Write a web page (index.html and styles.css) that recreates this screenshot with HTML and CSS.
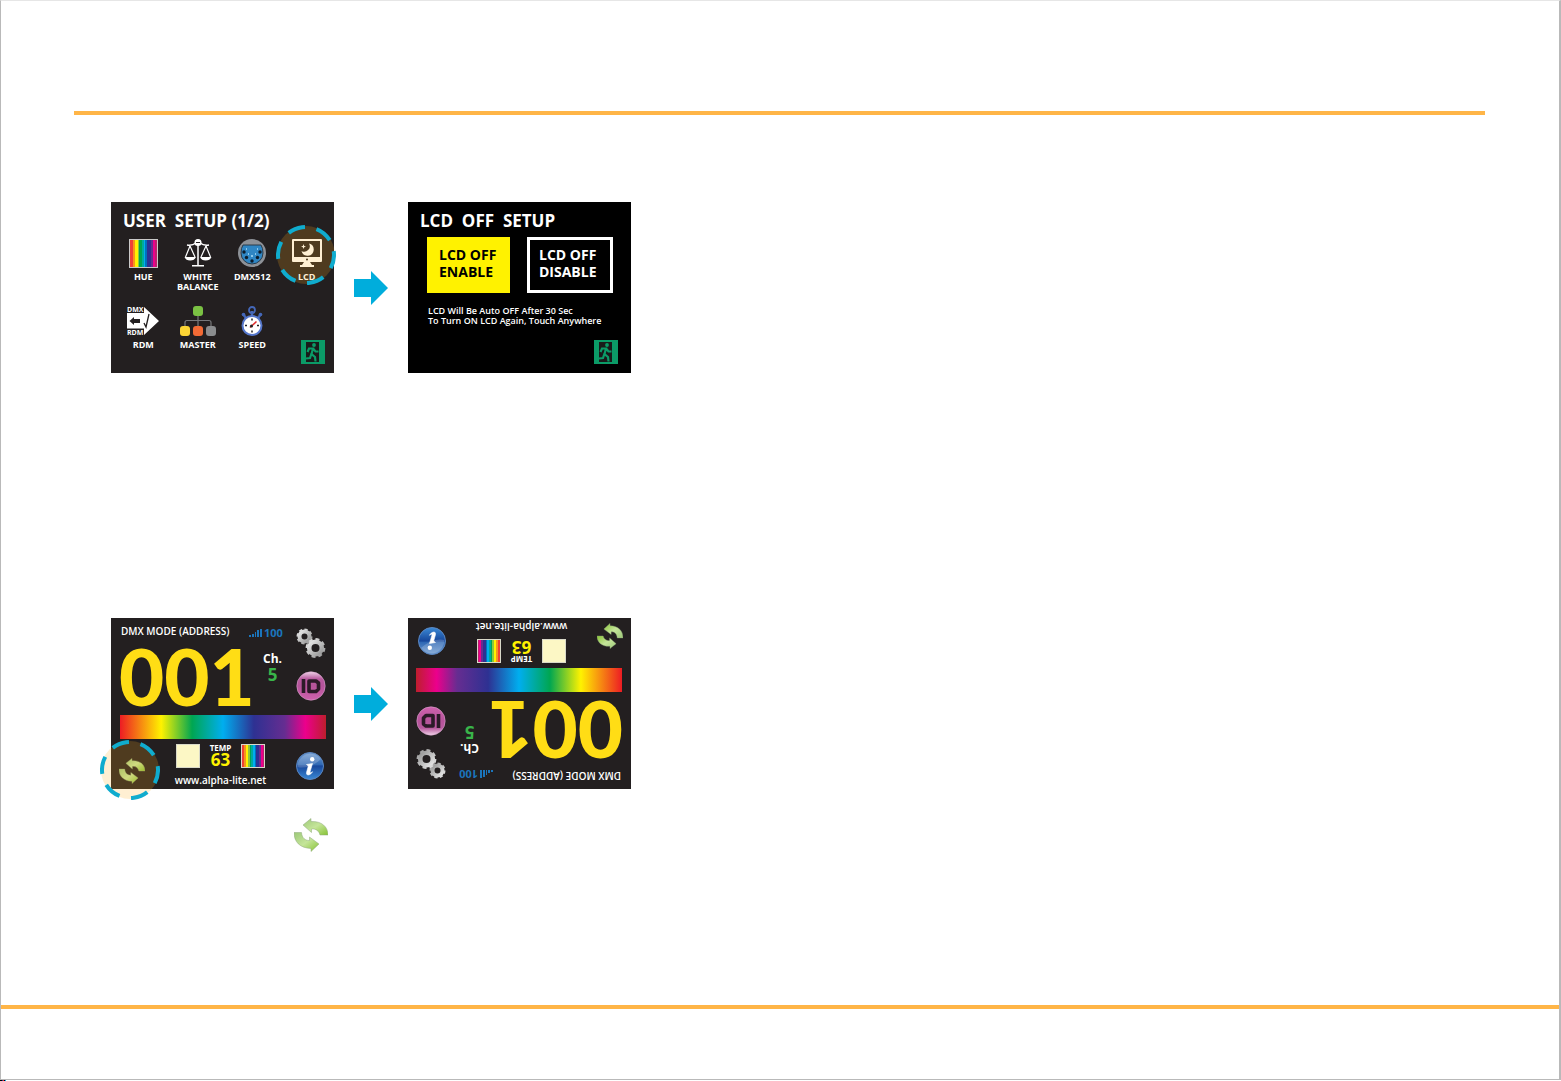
FILE: index.html
```html
<!DOCTYPE html>
<html lang="en">
	<head>
		<meta charset="UTF-8">
		<title>LCD Off Setup</title>
		<link rel="stylesheet" href="styles.css">
	</head>

	<body>
		<!-- shared icons -->
		<svg class="defs" width="0" height="0" aria-hidden="true">
			<defs>
				<linearGradient id="gGreen" x1="0" y1="0" x2="1" y2="1">
					<stop offset="0" stop-color="#9cc878"/>
					<stop offset="0.5" stop-color="#c5e59a"/>
					<stop offset="1" stop-color="#86c232"/>
				</linearGradient>
				<linearGradient id="gBlue" x1="0" y1="0" x2="0" y2="1">
					<stop offset="0" stop-color="#6f9bd0"/>
					<stop offset="0.45" stop-color="#2f68b4"/>
					<stop offset="0.5" stop-color="#17479b"/>
					<stop offset="1" stop-color="#3b8ad6"/>
				</linearGradient>
				<linearGradient id="gPink" x1="0" y1="0" x2="0" y2="1">
					<stop offset="0" stop-color="#f0d3e8"/>
					<stop offset="0.25" stop-color="#b85a9f"/>
					<stop offset="0.5" stop-color="#b5539a"/>
					<stop offset="1" stop-color="#cf62ae"/>
				</linearGradient>
				<linearGradient id="gGrey" x1="0" y1="0" x2="1" y2="1">
					<stop offset="0" stop-color="#e8e8e8"/>
					<stop offset="1" stop-color="#969696"/>
				</linearGradient>
			</defs>
			<symbol id="sync" viewBox="0 0 34 34">
				<path fill="url(#gGreen)" stroke="#8fa87c" stroke-width="0.500" d="M9 7L17 0.500V3.500C28 3 34 9 34 17H26C25 13 22 10.500 17.500 11V14.500Z"/>
				<path fill="url(#gGreen)" stroke="#8fa87c" stroke-width="0.500" d="M25 26L17 33.500V30.500C6 30 0 24 0 14.500H7.500C8 20 11 22.500 15.500 22.500V19Z"/>
			</symbol>
			<symbol id="info" viewBox="0 0 28 28">
				<circle cx="14" cy="14" r="13.500" fill="url(#gBlue)" stroke="#5b86c0"/>
				<path d="M1.500 15 C8 17 18 14 25 7 A13 13 0 0 0 1.500 15Z" fill="#fff" opacity="0.2"/>
				<circle cx="16.200" cy="7.200" r="2.200" fill="#fff"/>
				<path d="M10.500 12.500 L16.500 11.500 L14 20 C14 21.300 15 20.800 16.500 19.700 C15.500 22.500 10 25 10.500 20.500 L12.300 14 Z" fill="#fff" stroke="#fff" stroke-width="0.6"/>
			</symbol>
			<symbol id="ident" viewBox="0 0 30 30">
				<circle cx="15" cy="15" r="14.200" fill="url(#gPink)" stroke="#d9a3cc" stroke-width="0.600"/>
				<path d="M7.500 8V22" stroke="#2b1a28" stroke-width="3.600"/>
				<path d="M13 10H20L22.500 12V18L20 20.500H13Z" fill="none" stroke="#2b1a28" stroke-width="3.600" stroke-linejoin="round"/>
			</symbol>
			<symbol id="gears" viewBox="0 0 30 30">
				<g fill="none" stroke="url(#gGrey)">
					<circle cx="8.500" cy="8.500" r="5" stroke-width="4"/>
					<circle cx="8.500" cy="8.500" r="7" stroke-width="2" pathLength="56" stroke-dasharray="4 3"/>
					<circle cx="19.500" cy="20" r="6.300" stroke-width="4.600"/>
					<circle cx="19.500" cy="20" r="8.800" stroke-width="2.200" pathLength="56" stroke-dasharray="4 3"/>
				</g>
			</symbol>
			<symbol id="signal" viewBox="0 0 13 8">
				<path fill="#1b75bc" d="M0 6h2v2h-2zM3 5h2v3h-2zM6 3h1v5h-1zM8 1h2v7h-2zM11 0h2v8h-2z"/>
			</symbol>
			<symbol id="exit" viewBox="0 0 24 24">
				<rect width="24" height="24" fill="#0b9b67"/>
				<rect x="5" y="2" width="13" height="20" fill="#1a1a1a"/>
				<circle cx="13" cy="5" r="1.900" fill="#0b9b67"/>
				<path d="M6.500 12L8 8.500L12 8.500L10.500 14L14 17L14.500 21.500M10.500 13.500L9 18L5 18.500M12.500 9L14.500 11.500L17.500 11.500" fill="none" stroke="#0b9b67" stroke-width="2.200"/>
			</symbol>
			<symbol id="ring" viewBox="0 0 60 60">
				<circle cx="30" cy="30" r="29" fill="#ffaf1e" fill-opacity="0.2"/>
				<circle cx="30" cy="30" r="28" fill="none" stroke="#10acce" stroke-width="4" pathLength="60" stroke-dasharray="6 4" transform="rotate(-8 30 30)"/>
			</symbol>
			<symbol id="arrow" viewBox="0 0 34 34">
				<path fill="#00addc" d="M0 8H17V0L34 17L17 34V26H0Z"/>
			</symbol>
		</svg>

		<div class="page">
			<header class="pageHeader"></header>
			<main class="content">
				<section class="steps">
					<div class="screen setup">
						<h2 class="screenTitle">USER  SETUP (1/2)</h2>
						<div class="menu">
							<button class="item">
								<span class="itemIcon"><span class="hue"></span></span>
								<span>HUE</span>
							</button>
							<button class="item">
								<span class="itemIcon">
									<svg width="28" height="30" viewBox="0 0 28 30" fill="none" stroke="#fff" stroke-width="1.500">
										<path d="M14 5V27M3 7Q8 8 12 5M16 5Q20 8 25 7"/>
										<circle cx="14" cy="4.500" r="2.800" fill="#fff"/>
										<path d="M12 4.500H16" stroke="#231f20" stroke-width="1"/>
										<path d="M6 8L1.500 19M6 8L11 19M22 8L17 19M22 8L26.500 19" stroke-width="1.200"/>
										<path d="M0.500 19H12Q10.500 22.500 6.200 22.500T0.500 19ZM16 19H27.500Q26 22.500 21.700 22.500T16 19ZM8 27H20V28.500H8Z" fill="#fff" stroke="none"/>
									</svg>
								</span>
								<span>WHITE<br>BALANCE</span>
							</button>
							<button class="item">
								<span class="itemIcon">
									<svg width="28" height="28" viewBox="0 0 28 28">
										<circle cx="14" cy="14" r="14" fill="#8d9197"/>
										<path d="M5 6H23Q25 9 25 14A11 11 0 0 1 3 14Q3 9 5 6Z" fill="#2f86c4" stroke="#2a3a48"/>
										<g fill="#0c1c2b">
											<circle cx="6" cy="13" r="1.700"/><circle cx="22" cy="13" r="1.700"/>
											<circle cx="8.500" cy="18.500" r="1.700"/><circle cx="19.500" cy="18.500" r="1.700"/>
											<circle cx="14" cy="22" r="1.700"/>
										</g>
										<path d="M8 9h1v2h-1zM19 9h1v2h-1zM10 14h1v2h-1zM17 14h1v2h-1zM13 16h2v2h-2z" fill="#8cc8ea"/>
									</svg>
								</span>
								<span>DMX512</span>
							</button>
							<button class="item">
								<span class="itemIcon">
									<svg width="30" height="30" viewBox="0 0 30 30">
										<path fill="#fff" fill-rule="evenodd" d="M1 1H29Q30 1 30 2V23Q30 24 29 24H18L20 27H22V29H8V27H10L12 24H1Q0 24 0 23V2Q0 1 1 1ZM2 3V19H28V3ZM15 20.500A1 1 0 0 0 15 22.500A1 1 0 0 0 15 20.500Z"/>
										<path fill="#fff" d="M17 5.500A6.200 6.200 0 1 1 9.500 13A5.500 5.500 0 0 0 17 5.500Z"/>
										<path fill="#fff" d="M11.500 6L12.200 8L14 8.500L12.200 9.200L11.500 11L10.800 9.200L9 8.500L10.800 8Z"/>
									</svg>
								</span>
								<span>LCD</span>
							</button>
							<button class="item">
								<span class="itemIcon">
									<svg width="32" height="30" viewBox="0 0 32 30">
										<path fill="#fff" d="M0 7H17V1L32 15L17 29V22.500H0Z"/>
										<path fill="#231f20" d="M2.500 15L7 11V13H13V17H7V19Z"/>
										<path d="M17 17L19 21L22 8" fill="none" stroke="#231f20" stroke-width="1.300"/>
										<text class="iconText" x="0" y="6">DMX</text>
										<text class="iconText" x="0" y="29">RDM</text>
									</svg>
								</span>
								<span>RDM</span>
							</button>
							<button class="item">
								<span class="itemIcon">
									<svg width="36" height="30" viewBox="0 0 36 30">
										<path d="M18 10V20M5 21V16.500Q5 14.500 7 14.500H29Q31 14.500 31 16.500V21" fill="none" stroke="#77787b" stroke-width="1.200"/>
										<rect x="13" y="0" width="10" height="10" rx="3" fill="#7ac143"/>
										<rect x="0" y="20" width="10" height="10" rx="3" fill="#fcd535"/>
										<rect x="13" y="20" width="10" height="10" rx="3" fill="#f26a35"/>
										<rect x="26" y="20" width="10" height="10" rx="3" fill="#8a8c8e"/>
									</svg>
								</span>
								<span>MASTER</span>
							</button>
							<button class="item">
								<span class="itemIcon">
									<svg width="22" height="31" viewBox="0 0 22 31">
										<circle cx="11" cy="4" r="3" fill="none" stroke="#4467b8" stroke-width="1.800"/>
										<path d="M11 5V10M2 8L5 12M20 8L17 12" stroke="#4467b8" stroke-width="2.400"/>
										<circle cx="2.500" cy="8.500" r="1.800" fill="#4467b8"/><circle cx="19.500" cy="8.500" r="1.800" fill="#4467b8"/>
										<circle cx="11" cy="19.500" r="9.500" fill="#fff" stroke="#5577cc" stroke-width="2"/>
										<path d="M11 12.500V14.500M11 24.500V26.500M4 19.500H6M16 19.500H18" stroke="#222" stroke-width="1.500"/>
										<path d="M9 21.500L15.500 15.500" stroke="#e02b2b" stroke-width="1.600"/>
										<circle cx="10.500" cy="20" r="1.500" fill="#222"/>
									</svg>
								</span>
								<span>SPEED</span>
							</button>
							<button class="exitBtn" aria-label="Exit"><svg width="24" height="24"><use href="#exit"/></svg></button>
						</div>
						<svg class="ring ringLcd" width="60" height="60"><use href="#ring"/></svg>
					</div>
					<svg class="arrow" width="34" height="34"><use href="#arrow"/></svg>
					<div class="screen lcd">
						<h2 class="screenTitle">LCD  OFF  SETUP</h2>
						<div class="choices">
							<button class="choice enable">LCD OFF<br>ENABLE</button>
							<button class="choice disable">LCD OFF<br>DISABLE</button>
						</div>
						<p class="note">LCD Will Be Auto OFF After 30 Sec<br>To Turn ON LCD Again, Touch Anywhere</p>
						<button class="exitBtn" aria-label="Exit"><svg width="24" height="24"><use href="#exit"/></svg></button>
					</div>
				</section>

				<section class="steps">
					<div class="screen home">
						<div class="top">
							<div class="mode">
								<div class="modeTitle">DMX MODE (ADDRESS)</div>
								<div class="address">001</div>
							</div>
							<div class="status">
								<div class="level"><svg width="13" height="8"><use href="#signal"/></svg>100</div>
								<div class="ch">Ch.</div>
								<div class="chNum">5</div>
							</div>
							<div class="tools">
								<button aria-label="Settings"><svg width="30" height="30"><use href="#gears"/></svg></button>
								<button aria-label="ID"><svg width="30" height="30"><use href="#ident"/></svg></button>
							</div>
						</div>
						<div class="spectrum"></div>
						<div class="bottom">
							<button class="syncBtn" aria-label="Rotate"><svg width="26" height="26"><use href="#sync"/></svg></button>
							<div class="middle">
								<div class="temps">
									<span class="swatch cream"></span>
									<div class="temp"><span>TEMP</span><b>63</b></div>
									<span class="swatch hue"></span>
								</div>
								<a class="site" href="#">www.alpha-lite.net</a>
							</div>
							<button class="infoBtn" aria-label="Info"><svg width="28" height="28"><use href="#info"/></svg></button>
						</div>
						<svg class="ring ringSync" width="60" height="60"><use href="#ring"/></svg>
					</div>
					<svg class="arrow" width="34" height="34"><use href="#arrow"/></svg>
					<div class="screen home flipped">
						<div class="top">
							<div class="mode">
								<div class="modeTitle">DMX MODE (ADDRESS)</div>
								<div class="address">001</div>
							</div>
							<div class="status">
								<div class="level"><svg width="13" height="8"><use href="#signal"/></svg>100</div>
								<div class="ch">Ch.</div>
								<div class="chNum">5</div>
							</div>
							<div class="tools">
								<button aria-label="Settings"><svg width="30" height="30"><use href="#gears"/></svg></button>
								<button aria-label="ID"><svg width="30" height="30"><use href="#ident"/></svg></button>
							</div>
						</div>
						<div class="spectrum"></div>
						<div class="bottom">
							<button class="syncBtn" aria-label="Rotate"><svg width="26" height="26"><use href="#sync"/></svg></button>
							<div class="middle">
								<div class="temps">
									<span class="swatch cream"></span>
									<div class="temp"><span>TEMP</span><b>63</b></div>
									<span class="swatch hue"></span>
								</div>
								<a class="site" href="#">www.alpha-lite.net</a>
							</div>
							<button class="infoBtn" aria-label="Info"><svg width="28" height="28"><use href="#info"/></svg></button>
						</div>
					</div>
				</section>
				<div class="legend"><svg width="34" height="34"><use href="#sync"/></svg></div>
			</main>
			<footer class="pageFooter"></footer>
		</div>
		<div class="marks"></div>
	</body>
</html>
```
FILE: styles.css
```css
*{
	box-sizing: border-box;
}
body{
	margin: 0;
	min-height: 100vh;
	display: flex;
	flex-direction: column;
	background: #fff;
	font-family: "Open Sans","Noto Sans",sans-serif;
}
button{
	margin: 0;
	padding: 0;
	border: none;
	background: none;
	color: inherit;
	font: inherit;
	line-height: inherit;
}
svg{
	display: block;
}
.defs{
	position: absolute;
}
.page{
	flex-grow: 1;
	display: flex;
	flex-direction: column;
	border: solid #b9b9b9;
	border-width: 1px 2px 1px 1px;
	border-top-color: #e6e6e6;
}
.pageHeader{
	height: 114px;
	margin: 0 74px 0 73px;
	border-bottom: solid 4px #ffb547;
}
.content{
	flex-grow: 1;
	padding: 87px 110px 0;
}
.pageFooter{
	height: 74px;
	border-top: solid 4px #ffb547;
}
.marks{
	width: 6px;
	height: 1px;
	background: linear-gradient(90deg,#000 0 2px,#2e3192 2px 3px,#ed1c24 3px 4px,#000 4px 5px,#00aeef 5px);
}
.steps{
	display: flex;
	align-items: center;
	gap: 20px;
}
.steps + .steps{
	margin-top: 245px;
}
.screen{
	position: relative;
	width: 223px;
	height: 171px;
	display: flex;
	flex-direction: column;
	background: #231f20;
	color: #fff;
}
.screenTitle{
	margin: 8px 0 0 12px;
	font-size: 17px;
	line-height: 21px;
	font-weight: 700;
	white-space: pre;
}
.ring{
	position: absolute;
	pointer-events: none;
}
.ringLcd{
	left: 165px;
	top: 23px;
}
.ringSync{
	left: -11px;
	top: 122px;
}

/* user setup */
.menu{
	flex-grow: 1;
	display: grid;
	grid-template-columns: repeat(4,1fr);
	grid-template-rows: 56px 1fr;
	row-gap: 12px;
	padding: 6px 0 9px 5px;
}
.item{
	display: flex;
	flex-direction: column;
	align-items: center;
	gap: 3px;
	font-size: 9px;
	line-height: 10px;
	font-weight: 700;
}
.itemIcon{
	height: 32px;
	display: flex;
	align-items: center;
}
.iconText{
	fill: #fff;
	font-size: 7px;
	font-weight: 700;
}
.hue{
	width: 29px;
	height: 29px;
	border: solid 1px #c9c9c9;
	background: linear-gradient(90deg,#ef4136 0 10%,#f7941d 10% 19%,#fff200 19% 28%,#8dc63f 28% 35%,#00a651 35% 43%,#00a99d 43% 50%,#00aeef 50% 57%,#0072bc 57% 64%,#2e3192 64% 76%,#662d91 76% 86%,#ec008c 86% 94%,#be1e6d 94%);
}
.exitBtn{
	grid-column: 4;
	align-self: flex-end;
	justify-self: end;
	margin-right: 9px;
}

/* lcd off */
.lcd{
	background: #000;
	padding-bottom: 9px;
}
.choices{
	display: flex;
	gap: 17px;
	margin: 6px 18px 0 19px;
}
.choice{
	height: 56px;
	border: solid 3px #fff;
	padding: 0 0 4px 9px;
	font-size: 14px;
	line-height: 17px;
	font-weight: 700;
	text-align: left;
}
.enable{
	width: 83px;
	background: #fff200;
	border-color: #fff200;
	color: #000;
}
.disable{
	width: 86px;
}
.note{
	margin: 13px 0 0 20px;
	font-size: 9px;
	line-height: 10px;
	font-weight: 600;
	white-space: nowrap;
}
.lcd .exitBtn{
	margin-top: auto;
	margin-right: 13px;
}

/* home */
.top{
	display: flex;
	height: 97px;
	padding: 6px 8px 0;
}
.mode{
	width: 130px;
}
.modeTitle{
	padding-left: 2px;
	font-size: 10px;
	line-height: 14px;
	font-weight: 600;
	white-space: nowrap;
}
.address{
	font-family: Lato,sans-serif;
	font-size: 78px;
	line-height: 76px;
	font-weight: 900;
	color: #ffdd15;
}
.status{
	width: 48px;
	text-align: center;
	font-weight: 700;
}
.level{
	display: flex;
	align-items: center;
	gap: 2px;
	font-size: 11px;
	line-height: 18px;
	color: #1b75bc;
}
.ch{
	margin-top: 9px;
	font-size: 12px;
	line-height: 16px;
}
.chNum{
	font-size: 17px;
	line-height: 16px;
	color: #39b54a;
}
.tools{
	display: flex;
	flex-direction: column;
	gap: 13px;
	margin: 4px 0 0 auto;
}
.spectrum{
	height: 24px;
	margin: 0 8px 0 9px;
	background: linear-gradient(90deg,#ed1c24,#fff200 20%,#00a651 35%,#00aeef 50%,#2e3192 65%,#662d91 80%,#ec008c 90%,#be1e2d);
}
.bottom{
	flex-grow: 1;
	display: flex;
	justify-content: space-between;
	padding: 5px 10px 0 8px;
}
.syncBtn{
	align-self: flex-start;
	margin-top: 14px;
}
.infoBtn{
	align-self: flex-start;
	margin-top: 8px;
}
.middle{
	display: flex;
	flex-direction: column;
	align-items: center;
}
.temps{
	display: flex;
	gap: 10px;
}
.swatch{
	width: 24px;
	height: 24px;
	border: solid 1px #d9d9c9;
}
.cream{
	background: #fcf7c5;
}
.temp{
	display: flex;
	flex-direction: column;
	align-items: center;
	font-size: 8px;
	line-height: 7px;
	font-weight: 700;
}
.temp b{
	font-size: 17px;
	line-height: 17px;
	font-weight: 700;
	color: #fff200;
}
.site{
	margin-top: 5px;
	font-size: 10px;
	line-height: 14px;
	font-weight: 600;
	color: #fff;
	text-decoration: none;
}
.flipped{
	transform: rotate(180deg);
}
.legend{
	padding: 29px 0 0 183px;
}
```
